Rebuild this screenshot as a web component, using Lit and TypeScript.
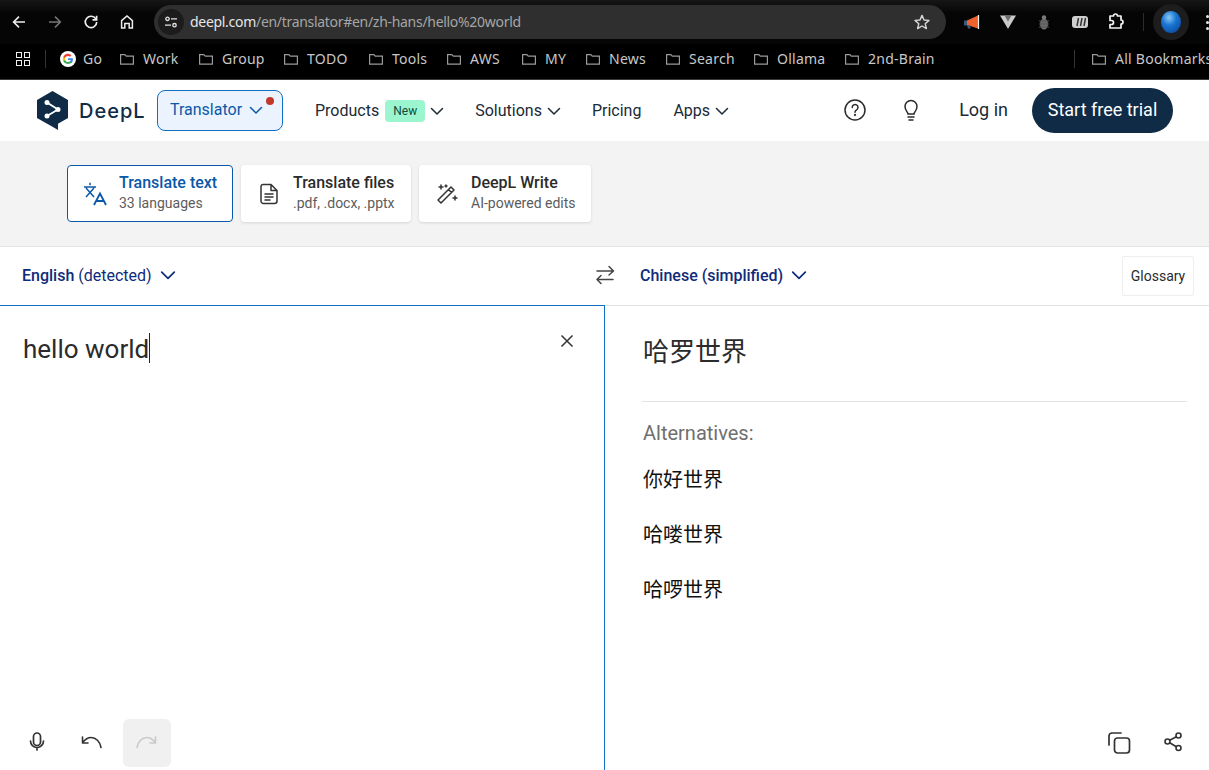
import { LitElement, css, html, svg } from "lit";
import { customElement } from "lit/decorators.js";

const chevron = (size = 14) => html`<svg class="chev" width=${size} height=${size} viewBox="0 0 14 14" fill="none" stroke="currentColor" stroke-width="1.5" stroke-linecap="round" stroke-linejoin="round"><path d="M1.5 4.5 7 10l5.5-5.5" /></svg>`;

const folder = svg`<svg width="16" height="16" viewBox="0 0 16 16" fill="none" stroke="#9a9a9a" stroke-width="1.2"><path d="M1.6 3.6h4.2l1.5 1.6h7.1v7.9H1.6z" /></svg>`;

const bookmarks = [
  { label: "Work", w: 79 },
  { label: "Group", w: 85 },
  { label: "TODO", w: 85 },
  { label: "Tools", w: 78 },
  { label: "AWS", w: 75 },
  { label: "MY", w: 64 },
  { label: "News", w: 80 },
  { label: "Search", w: 88 },
  { label: "Ollama", w: 91 },
  { label: "2nd-Brain", w: 230 },
];

const alternatives = ["你好世界", "哈喽世界", "哈啰世界"];

@customElement("browser-bar")
export class BrowserBar extends LitElement {
  static styles = css`
    :host {
      display: block;
      height: 80px;
      background: #000;
      font-family: "Noto Sans", sans-serif;
      overflow: hidden;
      box-sizing: border-box;
      border-bottom: 1px solid #3a3a3a;
    }
    .top {
      height: 44px;
      display: flex;
      align-items: center;
      background: linear-gradient(#161616, #050505 30%);
    }
    .nav {
      width: 36px;
      display: flex;
      justify-content: center;
      flex: none;
    }
    .nav:first-child {
      margin-left: 1px;
    }
    .pill {
      margin-left: 9px;
      width: 792px;
      height: 34px;
      margin-top: -1px;
      border-radius: 17px;
      background: #2f2f2f;
      display: flex;
      align-items: center;
      flex: none;
      padding: 0 15px 0 4px;
      box-sizing: border-box;
    }
    .site {
      width: 26px;
      height: 26px;
      border-radius: 50%;
      background: #1c1c1c;
      display: flex;
      align-items: center;
      justify-content: center;
      flex: none;
    }
    .url {
      margin-left: 6px;
      font-size: 14px;
      color: #a6a6a6;
      flex: 1;
      white-space: nowrap;
      letter-spacing: -0.3px;
    }
    .url b {
      font-weight: 400;
      color: #e6e6e6;
    }
    .exts {
      margin-left: 8px;
      display: flex;
      align-items: center;
    }
    .ext {
      width: 36px;
      display: flex;
      justify-content: center;
      flex: none;
    }
    .vsep {
      width: 1px;
      height: 18px;
      background: #2c2c2c;
      flex: none;
    }
    .avatar {
      margin-left: 9px;
      width: 36px;
      height: 36px;
      border-radius: 50%;
      background: #1d1d1d;
      display: flex;
      align-items: center;
      justify-content: center;
      flex: none;
    }
    .dots {
      margin-left: 17px;
      display: flex;
      flex-direction: column;
      gap: 3px;
      flex: none;
    }
    .dots i {
      width: 3px;
      height: 3px;
      border-radius: 50%;
      background: #e8e8e8;
    }
    .marks {
      height: 29px;
      display: flex;
      align-items: center;
      color: #c8c8c8;
      font-size: 14px;
      letter-spacing: 0.25px;
      white-space: nowrap;
    }
    .grid {
      margin-left: 16px;
      display: grid;
      grid-template-columns: 6px 6px;
      gap: 2px;
      flex: none;
    }
    .grid i {
      width: 4px;
      height: 4px;
      border: 1px solid #eee;
    }
    .marks .vsep {
      margin-left: 15px;
      background: #333;
    }
    .g {
      margin-left: 14px;
      display: flex;
      align-items: center;
      gap: 7px;
      width: 59px;
      flex: none;
    }
    .mark {
      display: flex;
      align-items: center;
      gap: 8px;
      flex: none;
    }
    .marks .all-sep {
      margin-left: 0;
    }
    .all {
      margin-left: 16px;
    }
  `;

  render() {
    return html`
      <div class="top">
        <span class="nav"><svg width="16" height="16" viewBox="0 0 16 16" fill="none" stroke="#eee" stroke-width="1.6"><path d="M14 8H2.6M8 2.6 2.6 8 8 13.4" /></svg></span>
        <span class="nav"><svg width="16" height="16" viewBox="0 0 16 16" fill="none" stroke="#777" stroke-width="1.5"><path d="M2 8h11.4M8 2.6 13.4 8 8 13.4" /></svg></span>
        <span class="nav"><svg width="16" height="16" viewBox="0 0 16 16" fill="none" stroke="#eee" stroke-width="1.7"><path d="M13 5.2A5.7 5.7 0 1 0 13.7 8" /><path d="M13.6 1.8v4.1H9.5" /></svg></span>
        <span class="nav"><svg width="16" height="16" viewBox="0 0 16 16" fill="none" stroke="#eee" stroke-width="1.5"><path d="M2.6 14V6.6L8 2l5.4 4.6V14h-3.2V9.4H5.8V14z" /></svg></span>
        <div class="pill">
          <span class="site"><svg width="16" height="16" viewBox="0 0 16 16" fill="none" stroke="#e4e4e4" stroke-width="1.3"><circle cx="4.5" cy="4.8" r="1.7" /><path d="M8 4.8h6M2 11.2h6" /><circle cx="11.5" cy="11.2" r="1.7" /></svg></span>
          <span class="url"><b>deepl.com</b>/en/translator#en/zh-hans/hello%20world</span>
          <svg width="18" height="18" viewBox="0 0 18 18" fill="none" stroke="#d8d8d8" stroke-width="1.4" stroke-linejoin="round"><path d="m9 2.4 2 4.6 5 .4-3.8 3.3 1.2 4.900L9 13l-4.400 2.600 1.200-4.900L2 7.400l5-.4z" /></svg>
        </div>
        <div class="exts">
          <span class="ext"><svg width="18" height="18" viewBox="0 0 18 18"><path d="M1 7.500h5v5H1z" fill="#3a5a7c" /><path d="M4 7.500 15 2.500v13L4 12z" fill="#f0622c" /><path d="M15.500 2v14" stroke="#eee" stroke-width="1.2" /><path d="M4 12h3l.6 3.500H5z" fill="#3a5a7c" /></svg></span>
          <span class="ext"><svg width="18" height="18" viewBox="0 0 18 18"><path d="M1 2.500h16L9 16z" fill="#c9c9c9" /><path d="M5.600 2.500h6.800L9 8.500z" fill="#6c6c6c" /></svg></span>
          <span class="ext"><svg width="16" height="18" viewBox="0 0 16 18"><ellipse cx="8" cy="11" rx="4" ry="5.500" fill="#6e6e6e" /><circle cx="8" cy="4.500" r="2.200" fill="#7a7a7a" /><path d="M3 8h10M3 11h10M3 14h10" stroke="#555" stroke-width="1" /></svg></span>
          <span class="ext"><svg width="18" height="16" viewBox="0 0 18 16"><rect x="1" y="2" width="16" height="12" rx="3" fill="#cfcfcf" /><path d="M6 12l1.500-8M9.500 12 11 4M13 12l1.500-8" stroke="#333" stroke-width="1.500" /></svg></span>
          <span class="ext"><svg width="18" height="18" viewBox="0 0 18 18" fill="none" stroke="#f2f2f2" stroke-width="1.700" stroke-linejoin="round"><path d="M3 3h3.500a2 2 0 0 1 4 0H14v4a2 2 0 0 1 0 4v4H3v-3.500h1.500a2 2 0 0 0 0-4H3z" /></svg></span>
        </div>
        <span class="vsep" style="margin-left:9px"></span>
        <span class="avatar"><svg width="20" height="22" viewBox="0 0 20 22"><defs><radialGradient id="sp" cx="0.4" cy="0.3" r="0.8"><stop offset="0" stop-color="#8cc8f5" /><stop offset="0.45" stop-color="#1976d2" /><stop offset="1" stop-color="#0d47a1" /></radialGradient></defs><ellipse cx="10" cy="11" rx="10" ry="11" fill="url(#sp)" /></svg></span>
        <span class="dots"><i></i><i></i><i></i></span>
      </div>
      <div class="marks">
        <span class="grid"><i></i><i></i><i></i><i></i></span>
        <span class="vsep"></span>
        <span class="g">
          <svg width="16" height="16" viewBox="0 0 16 16"><circle cx="8" cy="8" r="8" fill="#fff" /><path d="M12.900 8.200c0-.4 0-.7-.1-1H8v1.900h2.800a2.400 2.400 0 0 1-1 1.500v1.300h1.700c1-.9 1.400-2.200 1.400-3.700z" fill="#4285f4" /><path d="M8 13c1.400 0 2.500-.5 3.500-1.200l-1.700-1.300c-.5.300-1.100.5-1.800.5-1.300 0-2.500-.9-2.900-2.100H3.300v1.300A5 5 0 0 0 8 13z" fill="#34a853" /><path d="M5.100 8.900a3 3 0 0 1 0-1.900V5.700H3.300a5 5 0 0 0 0 4.500z" fill="#fbbc05" /><path d="M8 5c.8 0 1.500.3 2 .8l1.500-1.500A5 5 0 0 0 3.300 5.700L5.100 7C5.500 5.800 6.700 5 8 5z" fill="#ea4335" /></svg>
          Go
        </span>
        ${bookmarks.map(
          (b) => html`<span class="mark" style="width:${b.w}px">${folder}${b.label}</span>`
        )}
        <span class="vsep all-sep"></span>
        <span class="mark all">${folder}All Bookmarks</span>
      </div>
    `;
  }
}

@customElement("site-nav")
export class SiteNav extends LitElement {
  static styles = css`
    :host {
      display: flex;
      align-items: center;
      height: 61px;
      padding-left: 36px;
      background: #fff;
      font-family: Roboto, sans-serif;
      font-size: 16px;
      color: #1a2a36;
      white-space: nowrap;
    }
    .logo {
      display: flex;
      align-items: center;
      gap: 10px;
      width: 121px;
      flex: none;
    }
    .wordmark {
      font-family: Inter, sans-serif;
      font-weight: 500;
      font-size: 20px;
      color: #0f2b46;
      letter-spacing: 1px;
    }
    .product {
      position: relative;
      width: 126px;
      height: 41px;
      box-sizing: border-box;
      border: 1px solid #0f6fc6;
      border-radius: 8px;
      background: #ebf4fe;
      color: #0a58a8;
      display: flex;
      align-items: center;
      gap: 7px;
      padding: 0 0 2px 12px;
      flex: none;
    }
    .dot {
      position: absolute;
      top: 6px;
      right: 8px;
      width: 8px;
      height: 8px;
      border-radius: 50%;
      background: #c0392b;
    }
    .links {
      display: flex;
      align-items: center;
      margin-left: 32px;
    }
    .link {
      display: flex;
      align-items: center;
      gap: 6px;
    }
    .link .chev {
      margin-left: -1px;
    }
    .solutions,
    .pricing {
      margin-left: 31px;
    }
    .apps {
      margin-left: 32px;
    }
    .badge {
      background: #9bf6d0;
      color: #0f4d3a;
      font-size: 12px;
      width: 40px;
      height: 22px;
      line-height: 22px;
      text-align: center;
      border-radius: 4px;
    }
    .right {
      margin-left: auto;
      display: flex;
      align-items: center;
      padding-right: 36px;
    }
    .right svg {
      margin-top: -2px;
    }
    .bulb {
      margin-left: 32px;
    }
    .login {
      font-size: 18px;
      margin: -2px 0 0 36px;
    }
    .trial {
      margin-left: 24px;
      width: 141px;
      height: 45px;
      box-sizing: border-box;
      padding-bottom: 2px;
      border-radius: 23px;
      background: #0f2b46;
      color: #fff;
      font-size: 18px;
      display: flex;
      align-items: center;
      justify-content: center;
    }
  `;

  render() {
    return html`
      <div class="logo">
        <svg width="33" height="39" viewBox="0 0 33 39">
          <path d="M16.500 0 32 9v18l-10 5.800V39l-5.500-3.200L1 27V9z" fill="#0f2b46" />
          <path d="M11 11.500 22 18.500 11 25" fill="none" stroke="#fff" stroke-width="1.800" />
          <circle cx="11" cy="11.500" r="2.500" fill="#fff" />
          <circle cx="22" cy="18.500" r="2.500" fill="#fff" />
          <circle cx="11" cy="25" r="2.500" fill="#fff" />
        </svg>
        <span class="wordmark">DeepL</span>
      </div>
      <div class="product">Translator ${chevron()}<span class="dot"></span></div>
      <div class="links">
        <span class="link">Products <span class="badge">New</span> ${chevron()}</span>
        <span class="link solutions">Solutions ${chevron()}</span>
        <span class="link pricing">Pricing</span>
        <span class="link apps">Apps ${chevron()}</span>
      </div>
      <div class="right">
        <svg width="24" height="24" viewBox="0 0 24 24" fill="none" stroke="#2b2b2b" stroke-width="1.500" stroke-linecap="round"><circle cx="12" cy="12" r="10" /><path d="M9.200 9.400a2.900 2.900 0 1 1 4.400 2.500c-1 .6-1.600 1.200-1.600 2.300" /><circle cx="12" cy="17" r=".4" /></svg>
        <svg class="bulb" width="24" height="24" viewBox="0 0 24 24" fill="none" stroke="#2b2b2b" stroke-width="1.500" stroke-linecap="round"><path d="M9 16c0-2-3-3.500-3-7.500a6 6 0 0 1 12 0c0 4-3 5.500-3 7.500z" /><path d="M9 19h6M10 22h4" /></svg>
        <span class="login">Log in</span>
        <span class="trial">Start free trial</span>
      </div>
    `;
  }
}

@customElement("app-root")
export class AppRoot extends LitElement {
  static styles = css`
    :host {
      display: flex;
      flex-direction: column;
      height: 770px;
      overflow: hidden;
      background: #fff;
      font-family: Roboto, "Noto Sans CJK SC", sans-serif;
      color: #2b2b2b;
    }
    .modes {
      flex: none;
      background: #f3f3f3;
      border-bottom: 1px solid #e3e3e3;
      display: flex;
      gap: 8px;
      padding: 24px 0 0 67px;
      box-sizing: border-box;
      height: 106px;
    }
    .card {
      height: 57px;
      box-sizing: border-box;
      background: #fff;
      border-radius: 4px;
      box-shadow: 0 1px 3px rgba(0, 0, 0, 0.12);
      display: flex;
      align-items: center;
      flex: none;
    }
    .card svg {
      margin-left: 16px;
      flex: none;
    }
    .card.on {
      border: 1px solid #0a58a8;
      color: #0a58a8;
      box-shadow: none;
    }
    .card.on svg {
      margin-left: 15px;
    }
    .card .txt {
      margin-left: 12px;
      padding-bottom: 2px;
      display: flex;
      flex-direction: column;
      gap: 3px;
    }
    .card b {
      font-size: 16px;
      font-weight: 500;
      line-height: 19px;
    }
    .card small {
      font-size: 14px;
      line-height: 17px;
      color: #5c5c5c;
    }
    .langs {
      height: 59px;
      flex: none;
      box-sizing: border-box;
      border-bottom: 1px solid #e3e3e3;
      display: grid;
      grid-template-columns: 605px 1fr;
      color: #0f2b7a;
      font-size: 16px;
    }
    .lang {
      display: flex;
      align-items: center;
      gap: 8px;
      padding: 0 0 2px 22px;
    }
    .lang b {
      font-weight: 500;
    }
    .lang-r {
      padding-left: 35px;
    }
    .swap {
      margin-left: auto;
      margin-right: -12px;
      color: #444;
    }
    .glossary {
      margin: 2px 15px 0 auto;
      width: 72px;
      height: 40px;
      box-sizing: border-box;
      border: 1px solid #eee;
      border-radius: 2px;
      color: #2b2b2b;
      font-size: 14px;
      display: flex;
      align-items: center;
      justify-content: center;
    }
    .panes {
      flex: 1;
      display: grid;
      grid-template-columns: 605px 1fr;
      min-height: 0;
    }
    .pane {
      display: flex;
      flex-direction: column;
      min-height: 0;
    }
    .pane-l {
      border-top: 1px solid #0f6fc6;
      border-right: 1px solid #0f6fc6;
      margin-top: -1px;
      box-sizing: border-box;
    }
    .input {
      display: flex;
      justify-content: space-between;
      padding: 24px 29px 0 23px;
      font-size: 26px;
    }
    .typed {
      display: inline-block;
      border-right: 1px solid #222;
      height: 30px;
      line-height: 32px;
      margin-top: 3px;
    }
    .close {
      margin-top: 3px;
      color: #333;
    }
    .tools {
      margin-top: auto;
      display: flex;
      align-items: center;
      height: 48px;
      margin-bottom: 3px;
    }
    .tool {
      width: 48px;
      height: 48px;
      display: flex;
      align-items: center;
      justify-content: center;
      border-radius: 6px;
      flex: none;
      color: #333;
    }
    .tool.off {
      background: #f0f0f0;
      color: #c9c9c9;
      margin-left: 2px;
    }
    .tools-l {
      padding-left: 13px;
      gap: 6px;
    }
    .tools-r {
      justify-content: flex-end;
      padding-right: 12px;
      gap: 6px;
    }
    .out {
      padding: 0 22px 0 37px;
    }
    .main {
      font-size: 26px;
      line-height: 36px;
      padding: 28px 0 31px 1px;
      border-bottom: 1px solid #e3e3e3;
    }
    .alt-h {
      font-size: 20px;
      line-height: 24px;
      color: #6f6f6f;
      margin: 19px 0 0 1px;
    }
    .alts {
      display: flex;
      flex-direction: column;
      gap: 27px;
      margin: 21px 0 0 1px;
      font-size: 20px;
      line-height: 28px;
      color: #111;
    }
  `;

  render() {
    return html`
      <browser-bar></browser-bar>
      <site-nav></site-nav>
      <div class="modes">
        <div class="card on" style="width:166px">
          <svg width="24" height="24" viewBox="0 0 24 24" fill="none" stroke="currentColor" stroke-width="1.500"><path d="M1 5h12M7 .8v2.400M3 6l8 9M11 6l-8 9" /><path d="m11 23 6-11.500L23 23M13 19h8" stroke-width="1.800" /></svg>
          <div class="txt"><b>Translate text</b><small>33 languages</small></div>
        </div>
        <div class="card" style="width:170px">
          <svg width="24" height="24" viewBox="0 0 24 24" fill="none" stroke="#333" stroke-width="1.500" stroke-linejoin="round" stroke-linecap="round"><path d="M6 2.500h8l6 6V19a2.500 2.500 0 0 1-2.500 2.500h-11A2.500 2.500 0 0 1 4 19V4.500a2 2 0 0 1 2-2zM14 2.500V8.500h6M8 12h8M8 15h8M8 18h5" /></svg>
          <div class="txt"><b>Translate files</b><small>.pdf, .docx, .pptx</small></div>
        </div>
        <div class="card" style="width:172px">
          <svg width="24" height="24" viewBox="0 0 24 24" fill="none" stroke="#333" stroke-width="1.500" stroke-linejoin="round" stroke-linecap="round"><path d="M3 18 16 5l3 3L6 21zM13.500 7.500l3 3M6 3v4M4 5h4M20 14v4M18 16h4M11 3v2M10 4h2" /></svg>
          <div class="txt"><b>DeepL Write</b><small>AI-powered edits</small></div>
        </div>
      </div>
      <div class="langs">
        <div class="lang">
          <span><b>English</b> (detected)</span>
          ${chevron(16)}
          <svg class="swap" width="24" height="24" viewBox="0 0 24 24" fill="none" stroke="currentColor" stroke-width="1.500" stroke-linecap="round" stroke-linejoin="round"><path d="M4 8h16M16 3.500 20.500 8 16 12M20 16.500H4M8 12.500l-4 4 4 4" /></svg>
        </div>
        <div class="lang lang-r">
          <b>Chinese (simplified)</b>
          ${chevron(16)}
          <span class="glossary">Glossary</span>
        </div>
      </div>
      <div class="panes">
        <div class="pane pane-l">
          <div class="input">
            <span class="typed">hello world</span>
            <svg class="close" width="16" height="16" viewBox="0 0 16 16" fill="none" stroke="currentColor" stroke-width="1.500"><path d="m2.500 2.500 11 11M13.500 2.500l-11 11" /></svg>
          </div>
          <div class="tools tools-l">
            <span class="tool"><svg width="24" height="24" viewBox="0 0 24 24" fill="none" stroke="currentColor" stroke-width="1.700" stroke-linecap="round"><rect x="8.500" y="2" width="7" height="12.500" rx="3.500" /><path d="M5.500 10a6.500 6.500 0 0 0 13 0M12 16.500V19" /></svg></span>
            <span class="tool"><svg width="24" height="24" viewBox="0 0 24 24" fill="none" stroke="currentColor" stroke-width="1.600" stroke-linecap="round" stroke-linejoin="round"><path d="M22 16.500c-1-6-5-10-10-10-3 0-6 2-8.500 5M3.500 6v6H9" /></svg></span>
            <span class="tool off"><svg width="24" height="24" viewBox="0 0 24 24" fill="none" stroke="currentColor" stroke-width="1.600" stroke-linecap="round" stroke-linejoin="round"><path d="M2 16.500c1-6 5-10 10-10 3 0 6 2 8.500 5M20.500 6v6H15" /></svg></span>
          </div>
        </div>
        <div class="pane">
          <div class="out">
            <div class="main">哈罗世界</div>
            <div class="alt-h">Alternatives:</div>
            <div class="alts">${alternatives.map((a) => html`<span>${a}</span>`)}</div>
          </div>
          <div class="tools tools-r">
            <span class="tool"><svg width="24" height="24" viewBox="0 0 24 24" fill="none" stroke="currentColor" stroke-width="1.700" stroke-linecap="round"><rect x="7.500" y="7" width="15" height="15" rx="3" /><path d="M2 14V5a3 3 0 0 1 3-3h9" /></svg></span>
            <span class="tool"><svg width="24" height="24" viewBox="0 0 24 24" fill="none" stroke="currentColor" stroke-width="1.600"><circle cx="17.500" cy="4.500" r="2.500" /><circle cx="6.500" cy="10.500" r="2.500" /><circle cx="17.500" cy="17" r="2.500" /><path d="m8.700 9.300 6.600-3.600M8.700 11.800l6.600 3.900" /></svg></span>
          </div>
        </div>
      </div>
    `;
  }
}
